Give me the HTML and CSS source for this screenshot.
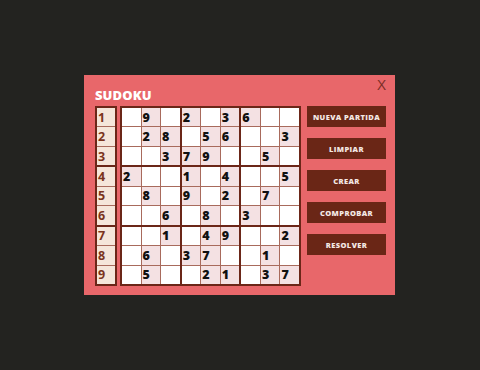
FILE: index.html
```html
<!DOCTYPE html>
<html lang="es">
<head>
    <meta charset="UTF-8">
    <meta name="viewport" content="width=device-width, initial-scale=1.0">
    <title>Sudoku</title>
    <link rel="stylesheet" href="styles.css">
</head>
<body>
    <!-- Ventana del juego -->
    <div class="modal">
        <span class="close">X</span>
        <div class="header">SUDOKU</div>

        <div class="board">
            <!-- Numeros de fila -->
            <div class="rows">
                <div class="row-box"><div class="rnum">1</div><div class="rnum">2</div><div class="rnum">3</div></div>
                <div class="row-box"><div class="rnum">4</div><div class="rnum">5</div><div class="rnum">6</div></div>
                <div class="row-box"><div class="rnum">7</div><div class="rnum">8</div><div class="rnum">9</div></div>
            </div>

            <!-- Tablero -->
            <div class="grid" id="grid"></div>

            <!-- Botones -->
            <div class="buttons">
                <button>NUEVA PARTIDA</button>
                <button>LIMPIAR</button>
                <button>CREAR</button>
                <button>COMPROBAR</button>
                <button>RESOLVER</button>
            </div>
        </div>
    </div>

    <script>
      const puzzle = [
          '.9.2.36..',
          '.28.56..3',
          '..379..5.',
          '2..1.4..5',
          '.8.9.2.7.',
          '..6.8.3..',
          '..1.49..2',
          '.6.37..1.',
          '.5..21.37'
      ];
      const grid = document.getElementById('grid');

      // 9 cajas de 3x3
      for (let b = 0; b < 9; b++) {
          const box = document.createElement('div');
          box.className = 'box';
          const br = Math.floor(b / 3) * 3;
          const bc = (b % 3) * 3;
          for (let i = 0; i < 9; i++) {
              const r = br + Math.floor(i / 3);
              const c = bc + (i % 3);
              const ch = puzzle[r][c];
              const cell = document.createElement('div');
              cell.className = 'cell';
              if (ch !== '.') {
                  cell.classList.add('given');
                  cell.textContent = ch;
              }
              box.appendChild(cell);
          }
          grid.appendChild(box);
      }
    </script>
</body>
</html>
```

FILE: styles.css
```css
body {
    margin: 0;
    height: 100vh;
    background-color: #232320;
    display: flex;
    justify-content: center;
    align-items: center;
    font-family: 'Open Sans', 'DejaVu Sans', sans-serif;
}
/* Ventana principal */
.modal {
    position: relative;
    width: 311px;
    height: 220px;
    box-sizing: border-box;
    padding: 9px 9px 9px 11px;
    margin-right: 1px;
    background-color: #e8676a;
}
.close {
    position: absolute;
    top: -1px;
    right: 9px;
    font-size: 15px;
    line-height: 20px;
    color: #7b2d25;
}
.header {
    height: 22px;
    line-height: 22px;
    font-size: 13px;
    font-weight: 800;
    color: #fff;
    letter-spacing: 0.1px;
}
.board {
    display: flex;
}
/* Columna de numeros */
.rows {
    width: 22px;
    height: 180px;
    box-sizing: border-box;
    border: 2px solid #6b2618;
    background-color: #6b2618;
    display: grid;
    grid-template-rows: repeat(3, 1fr);
    gap: 2px;
}
.row-box {
    display: grid;
    grid-template-rows: repeat(3, 1fr);
    gap: 1px;
    background-color: #a86a5c;
}
.rnum {
    background-color: #f5e6da;
    color: #7b341c;
    font-size: 12.5px;
    font-weight: 700;
    padding-left: 1px;
    display: flex;
    align-items: center;
}
/* Tablero */
.grid {
    margin-left: 3px;
    width: 181px;
    height: 180px;
    box-sizing: border-box;
    border: 2px solid #6b2618;
    background-color: #6b2618;
    display: grid;
    grid-template-columns: repeat(3, 1fr);
    grid-template-rows: repeat(3, 1fr);
    gap: 2px;
}
.box {
    display: grid;
    grid-template-columns: repeat(3, 1fr);
    grid-template-rows: repeat(3, 1fr);
    gap: 1px;
    background-color: #a86a5c;
}
.cell {
    background-color: #fff;
    color: #111;
    font-size: 12.5px;
    font-weight: 800;
    padding-left: 1px;
    display: flex;
    align-items: center;
}
.cell.given {
    background-color: #f4e1e3;
}
/* Botones */
.buttons {
    margin-left: 6px;
    display: flex;
    flex-direction: column;
    gap: 11px;
}
button {
    width: 79px;
    height: 21px;
    border: none;
    padding: 0;
    background-color: #6a2616;
    color: #f4e8e4;
    font-family: 'Open Sans', 'DejaVu Sans', sans-serif;
    font-size: 7.5px;
    font-weight: 800;
    letter-spacing: 0.4px;
    cursor: pointer;
}
```
